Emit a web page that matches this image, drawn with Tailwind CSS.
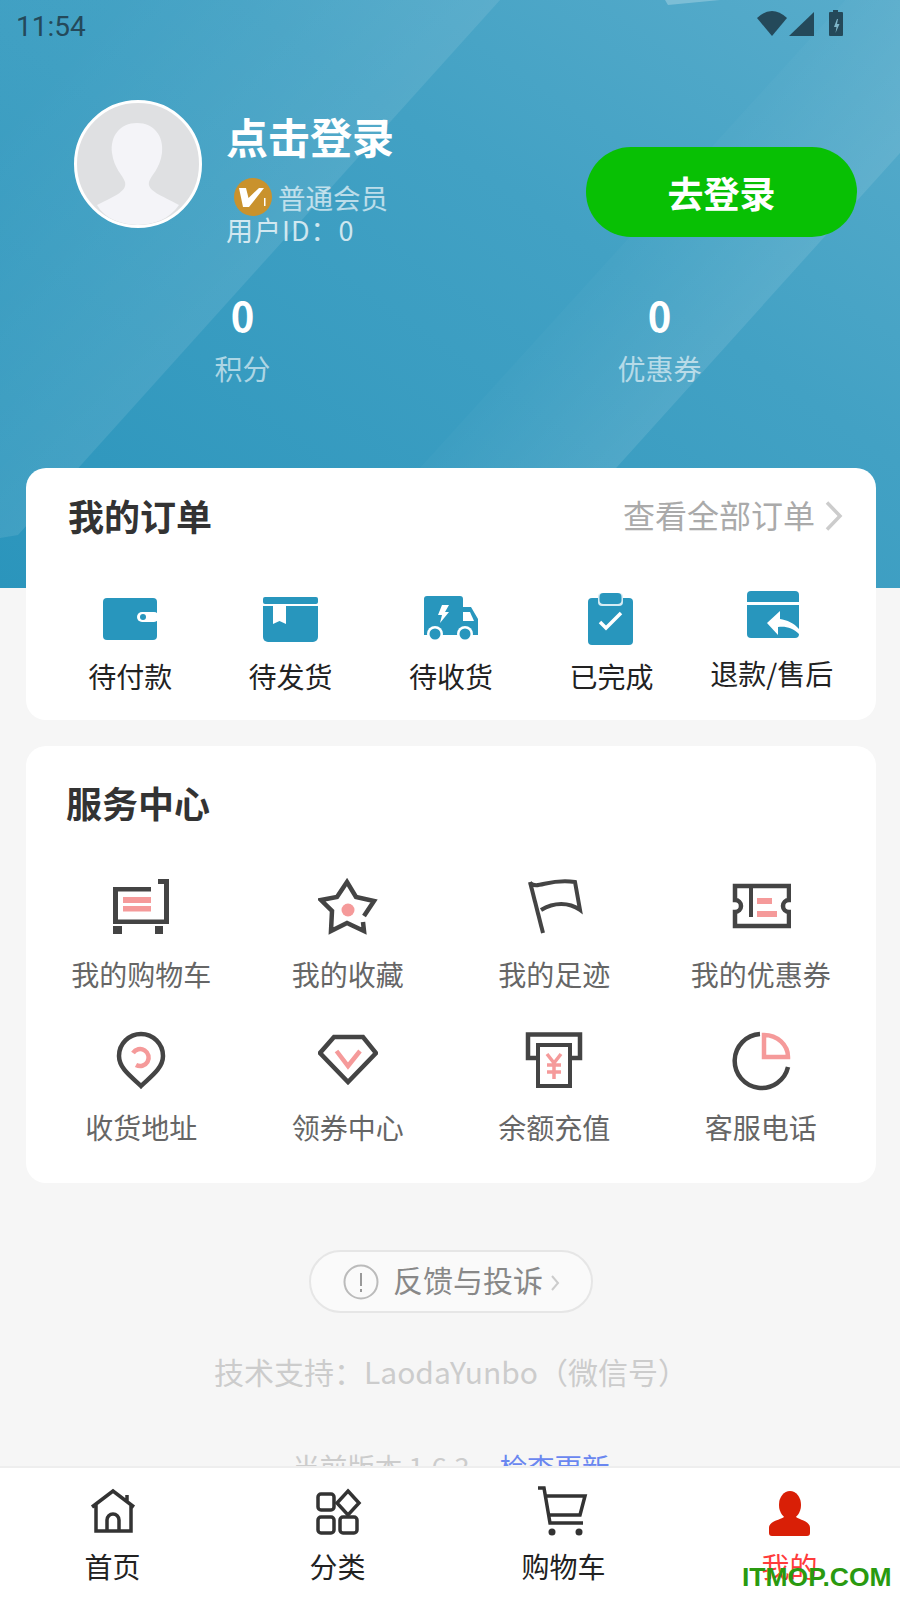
<!DOCTYPE html>
<html lang="zh">
<head>
<meta charset="utf-8">
<script src="https://cdn.jsdelivr.net/npm/@tailwindcss/browser@4"></script>
<title>我的</title>
</head>
<body class="m-0">
<div class="relative w-[900px] h-[1600px] overflow-hidden bg-[#f6f6f6] [font-family:'Noto_Sans_CJK_SC','Noto_Sans',sans-serif]">

  <!-- Header -->
  <header class="relative h-[588px] overflow-hidden bg-[linear-gradient(215deg,#58accb_0%,#42a1c4_38%,#2b95bc_100%)]">
    <svg class="absolute inset-0" width="900" height="588" viewBox="0 0 900 588" fill="none">
      <defs>
        <linearGradient id="g1" x1="60" y1="60" x2="290" y2="268" gradientUnits="userSpaceOnUse">
          <stop offset="0" stop-color="#fff" stop-opacity=".02"/>
          <stop offset="1" stop-color="#fff" stop-opacity=".1"/>
        </linearGradient>
        <linearGradient id="g2" x1="627" y1="240" x2="734" y2="337" gradientUnits="userSpaceOnUse">
          <stop offset="0" stop-color="#fff" stop-opacity=".02"/>
          <stop offset="1" stop-color="#fff" stop-opacity=".1"/>
        </linearGradient>
      </defs>
      <path d="M0 0H500L18 535L0 538Z" fill="url(#g1)"/>
      <path d="M320 588L420 468L627 240L900 -60V153L617 467L510 588Z" fill="url(#g2)"/>
      <path d="M668 5L720 0H665Z" fill="#fff" fill-opacity=".25"/>
    </svg>

    <!-- Status bar -->
    <div class="relative flex h-[50px] items-center pl-[16px] pr-[56px] text-[#24495a]">
      <span class="[font-family:Roboto,sans-serif] text-[28px] leading-[50px] pt-[3px]">11:54</span>
      <div class="ml-auto flex items-start">
        <svg width="87" height="30" viewBox="0 0 87 30" fill="#24495a">
          <path d="M0 8Q15 -6 30 8L15 26Z"/>
          <path d="M32 26L57 2V26Z"/>
          <path d="M72 3a1 1 0 0 1 1-1h3V0h5v2h4a1 1 0 0 1 1 1v22a1 1 0 0 1-1 1H73a1 1 0 0 1-1-1Z"/>
          <path d="M80 9l-3 8h2.500l-1 6 4-9h-2.500l1-5Z" fill="#7fb6c9"/>
        </svg>
      </div>
    </div>

    <!-- Profile -->
    <div class="relative mt-[50px] flex h-[150px] items-start pl-[74px] pr-[43px]">
      <div class="w-[128px] h-[128px] shrink-0 overflow-hidden rounded-full border-[3px] border-white bg-[#dfe0e2]">
        <svg width="122" height="122" viewBox="0 0 122 122">
          <path d="M60 20C43 20 33 33 35 50C37 66 46 72 48 79C50 88 40 92 20 102C28 116 44 122 60 122C78 122 92 116 102 102C84 92 70 88 72 79C74 72 83 66 85 50C87 33 77 20 60 20Z" fill="#f4f4f8"/>
        </svg>
      </div>
      <div class="ml-[24px] mt-[11px] text-white">
        <div class="text-[42px] font-bold leading-[50px]">点击登录</div>
        <div class="mt-[17px] flex h-[37px] items-center pl-[8px]">
          <svg width="38" height="38" viewBox="0 0 38 38" class="shrink-0">
            <circle cx="19" cy="19" r="19" fill="#c9922d"/>
            <path d="M5 10h7l2.500 10L25 10h5L15 29H9Z" fill="#fff"/>
            <rect x="30" y="20" width="1.500" height="8" fill="#fff"/>
          </svg>
          <span class="ml-[6px] text-[27.5px] leading-[30px] text-white/65">普通会员</span>
        </div>
        <div class="text-[27px] leading-[30px] tracking-[1px] text-white/75">用户ID：0</div>
      </div>
      <div class="ml-auto mt-[47px] flex h-[90px] w-[271px] items-center justify-center rounded-full bg-[#08c004] text-[36px] font-bold text-white">去登录</div>
    </div>

    <!-- Stats -->
    <div class="relative mt-[42px] grid grid-cols-2 pl-[34px] pr-[32px] text-center">
      <div>
        <div class="text-[40px] font-bold leading-[46px] text-white">0</div>
        <div class="mt-[10px] text-[28px] leading-[40px] text-white/60">积分</div>
      </div>
      <div>
        <div class="text-[40px] font-bold leading-[46px] text-white">0</div>
        <div class="mt-[10px] text-[28px] leading-[40px] text-white/60">优惠券</div>
      </div>
    </div>
  </header>

  <main class="relative -mt-[120px] pl-[26px] pr-[24px]">
    <!-- Orders -->
    <section class="h-[252px] rounded-[20px] bg-white">
      <div class="flex items-center pl-[42px] pr-[33px] pt-[22px]">
        <h2 class="text-[36px] font-bold leading-[50px] text-[#333]">我的订单</h2>
        <span class="ml-auto -mt-[2px] text-[32px] leading-[50px] text-[#aaa]">查看全部订单</span>
        <svg width="18" height="30" viewBox="0 0 18 30" fill="none" stroke="#ccc" stroke-width="3.500" class="ml-[10px] mt-[2px]"><path d="M2 1.500L15 15L2 28.500"/></svg>
      </div>
      <div class="mt-[50px] grid grid-cols-5 px-[24px] text-[28px] text-[#222]">
        <div class="flex flex-col items-center">
          <svg width="60" height="60" viewBox="0 0 60 60">
            <rect x="3" y="8" width="54" height="42" rx="4" fill="#2896bd"/>
            <rect x="37" y="22" width="22" height="10" rx="5" fill="#fff"/>
            <circle cx="43" cy="27" r="3" fill="#2896bd"/>
          </svg>
          <div class="mt-[6px] leading-[40px]">待付款</div>
        </div>
        <div class="flex flex-col items-center">
          <svg width="60" height="60" viewBox="0 0 60 60">
            <rect x="2" y="7" width="55" height="7" rx="2" fill="#2896bd"/>
            <path d="M2 16H57V47a5 5 0 0 1-5 5H7a5 5 0 0 1-5-5Z" fill="#2896bd"/>
            <path d="M12 16H25V34L18.500 31L12 34Z" fill="#fff"/>
          </svg>
          <div class="mt-[6px] leading-[40px]">待发货</div>
        </div>
        <div class="flex flex-col items-center">
          <svg width="60" height="60" viewBox="0 0 60 60">
            <path d="M3 9a3 3 0 0 1 3-3H39a3 3 0 0 1 3 3V17H50L57 29V45H3Z" fill="#2896bd"/>
            <path d="M42 22H49L53 31H42Z" fill="#fff"/>
            <path d="M21 15H28L24 22H28L19 33L21 25H17Z" fill="#fff"/>
            <circle cx="14" cy="44" r="8" fill="#fff"/><circle cx="14" cy="44" r="5.500" fill="#2896bd"/>
            <circle cx="44" cy="44" r="8" fill="#fff"/><circle cx="44" cy="44" r="5.500" fill="#2896bd"/>
          </svg>
          <div class="mt-[6px] leading-[40px]">待收货</div>
        </div>
        <div class="flex flex-col items-center">
          <svg width="60" height="60" viewBox="0 0 60 60">
            <rect x="7" y="8" width="45" height="47" rx="4" fill="#2896bd"/>
            <rect x="17" y="3" width="25" height="13" rx="4" fill="#d6ecf4"/>
            <rect x="18.500" y="3" width="22" height="11" rx="4" fill="#2896bd"/>
            <path d="M19 32L25 38L40 23" fill="none" stroke="#fff" stroke-width="3.500"/>
          </svg>
          <div class="mt-[6px] leading-[40px]">已完成</div>
        </div>
        <div class="flex flex-col items-center">
          <svg width="60" height="60" viewBox="0 0 60 60">
            <path d="M5 5a4 4 0 0 1 4-4H53a4 4 0 0 1 4 4V12H5Z" fill="#2896bd"/>
            <path d="M5 15H57V44a4 4 0 0 1-4 4H9a4 4 0 0 1-4-4Z" fill="#2896bd"/>
            <path d="M38 21L25 33L36 45V37C44 36 51 38 57 44V39C52 33 45 30 38 29Z" fill="#fff"/>
          </svg>
          <div class="mt-[3px] leading-[40px]">退款/售后</div>
        </div>
      </div>
    </section>

    <!-- Services -->
    <section class="mt-[26px] h-[437px] rounded-[20px] bg-white">
      <h2 class="pl-[40px] pt-[31px] text-[36px] font-bold leading-[50px] text-[#333]">服务中心</h2>
      <div class="mt-[51px] grid grid-cols-4 gap-y-[37px] px-[12px] text-[28px] text-[#666]">
        <div class="flex flex-col items-center">
          <svg width="60" height="60" viewBox="0 0 60 60">
            <path d="M47 1H58V46H2V9H40V13.500H7V41.500H53V6H47Z" fill="#444"/>
            <rect x="2" y="48" width="9" height="8" fill="#444"/><rect x="44" y="48" width="8" height="8" fill="#444"/>
            <rect x="12" y="19" width="28" height="6" fill="#f59a9a"/><rect x="12" y="28" width="28" height="5.500" fill="#f59a9a"/>
          </svg>
          <div class="mt-[16px] leading-[40px]">我的购物车</div>
        </div>
        <div class="flex flex-col items-center">
          <svg width="60" height="60" viewBox="0 0 60 60" fill="none">
            <path d="M45 44L46 53L29 45L13 53L14 33L3 22L19 19L29 4L38 19L56 23L46 38" stroke="#444" stroke-width="4.500"/>
            <circle cx="30" cy="32" r="6.500" fill="#f59a9a"/>
          </svg>
          <div class="mt-[16px] leading-[40px]">我的收藏</div>
        </div>
        <div class="flex flex-col items-center">
          <svg width="60" height="60" viewBox="0 0 60 60" fill="none" stroke="#444" stroke-width="4">
            <path d="M6 4L19 55"/>
            <path d="M6 5C14 12 24 0 51 4L56 32C45 24 30 24 17 32"/>
          </svg>
          <div class="mt-[16px] leading-[40px]">我的足迹</div>
        </div>
        <div class="flex flex-col items-center">
          <svg width="60" height="60" viewBox="0 0 60 60" fill="none">
            <path d="M4 8H58V22A6 6 0 0 0 58 34V48H4V34A6 6 0 0 0 4 22Z" stroke="#444" stroke-width="4.500"/>
            <path d="M20 8V39" stroke="#444" stroke-width="4"/>
            <rect x="26" y="20" width="15" height="6" fill="#f59a9a"/><rect x="26" y="33" width="20" height="6" fill="#f59a9a"/>
          </svg>
          <div class="mt-[16px] leading-[40px]">我的优惠券</div>
        </div>
        <div class="flex flex-col items-center">
          <svg width="60" height="60" viewBox="0 0 60 60" fill="none">
            <path d="M30 55C22 47 8 38 8 25A22 22 0 0 1 52 25C52 38 38 47 30 55Z" stroke="#444" stroke-width="4.500"/>
            <path d="M22 22A8.500 8.500 0 1 1 25 34" stroke="#f59a9a" stroke-width="4.500"/>
          </svg>
          <div class="mt-[16px] leading-[40px]">收货地址</div>
        </div>
        <div class="flex flex-col items-center">
          <svg width="60" height="60" viewBox="0 0 60 60" fill="none">
            <path d="M16 6H45L58 22L30 51L2 22Z" stroke="#444" stroke-width="4.500"/>
            <path d="M18.500 20L30 35L42 20" stroke="#f59a9a" stroke-width="4.500"/>
          </svg>
          <div class="mt-[16px] leading-[40px]">领券中心</div>
        </div>
        <div class="flex flex-col items-center">
          <svg width="60" height="60" viewBox="0 0 60 60" fill="none">
            <path d="M12 27H4V3.500H56V27H48" stroke="#444" stroke-width="4.500"/>
            <path d="M14 14H46V55H14Z" stroke="#444" stroke-width="4"/>
            <path d="M23 23L30 32L37 23M30 32V48M23 34H37M23 41H37" stroke="#f59a9a" stroke-width="3.500"/>
          </svg>
          <div class="mt-[16px] leading-[40px]">余额充值</div>
        </div>
        <div class="flex flex-col items-center">
          <svg width="60" height="60" viewBox="0 0 60 60" fill="none">
            <path d="M29 3A27 27 0 1 0 57 36" stroke="#444" stroke-width="4.500"/>
            <path d="M33 4V26H57A24 22 0 0 0 33 4Z" stroke="#f59a9a" stroke-width="4.500"/>
          </svg>
          <div class="mt-[16px] leading-[40px]">客服电话</div>
        </div>
      </div>
    </section>

    <!-- Footer links -->
    <div class="mt-[67px] flex justify-center">
      <div class="flex h-[63px] w-[284px] items-center rounded-full border-2 border-[#e6e6e6] bg-[#fafafa] pl-[32px]">
        <svg width="36" height="36" viewBox="0 0 36 36" fill="none" class="shrink-0">
          <circle cx="18" cy="18" r="16.500" stroke="#bbb" stroke-width="2"/>
          <path d="M18 9V22M18 25V28" stroke="#999" stroke-width="2"/>
        </svg>
        <span class="ml-[14px] pb-[6px] text-[30px] leading-[40px] text-[#888]">反馈与投诉</span>
        <svg width="10" height="18" viewBox="0 0 10 18" fill="none" stroke="#ccc" stroke-width="2" class="ml-[7px] mt-[3px]"><path d="M2 2L8 9L2 16"/></svg>
      </div>
    </div>
    <p class="mt-[35px] text-center text-[30px] leading-[46px] text-[#ccc]">技术支持：LaodaYunbo（微信号）</p>
    <p class="mt-[52px] flex justify-center text-[27.5px] leading-[40px] text-[#ccc]">当前版本 1.6.3<span class="ml-[30px] text-[#6a87f0]">检查更新</span></p>
  </main>

  <!-- Tab bar -->
  <nav class="absolute inset-x-0 bottom-0 grid h-[134px] grid-cols-4 border-t-2 border-[#eeeeee] bg-white text-center text-[28px] text-[#222]">
    <div class="flex flex-col items-center pt-[16px]">
      <svg width="60" height="60" viewBox="0 0 60 60" fill="none" stroke="#333" stroke-width="3.500">
        <path d="M9 23L30 7L51 23M13 20V47H48V20M24 47V36A6 6 0 0 1 36 36V47M44 11V17"/>
      </svg>
      <div class="leading-[40px] mt-[2px]">首页</div>
    </div>
    <div class="flex flex-col items-center pt-[16px]">
      <svg width="60" height="60" viewBox="0 0 60 60" fill="none" stroke="#333" stroke-width="3.500">
        <rect x="10" y="10" width="16" height="16" rx="3"/>
        <path d="M40 7L51 19L40 31L29 19Z"/>
        <rect x="10" y="33" width="16" height="16" rx="3"/>
        <rect x="32" y="33" width="17" height="16" rx="3"/>
      </svg>
      <div class="leading-[40px] mt-[2px]">分类</div>
    </div>
    <div class="flex flex-col items-center pl-[2px] pt-[16px]">
      <svg width="60" height="60" viewBox="0 0 60 60" fill="none" stroke="#333" stroke-width="3.500">
        <path d="M4 4H10L16 39H49M11 12H51L46 31H14"/>
        <circle cx="18" cy="48" r="3.500" fill="#333" stroke="none"/>
        <circle cx="45" cy="48" r="3.500" fill="#333" stroke="none"/>
      </svg>
      <div class="leading-[40px] mt-[2px]">购物车</div>
    </div>
    <div class="flex flex-col items-center pl-[4px] pt-[16px]">
      <svg width="60" height="60" viewBox="0 0 60 60" fill="#d91f06">
        <ellipse cx="30" cy="21" rx="11" ry="14"/>
        <path d="M24 28H36V33C40 36 50 37 50 44V49A3 3 0 0 1 47 52H12A3 3 0 0 1 9 49V44C9 37 20 36 24 33Z"/>
      </svg>
      <div class="leading-[40px] mt-[2px] text-[#ff3b3b]">我的</div>
    </div>
  </nav>

  <div class="absolute left-[742px] top-[1560px] text-[26.5px] font-bold leading-[34px] text-[#2a9a10] [font-family:'Liberation_Sans',sans-serif]">ITMOP.COM</div>
</div>
</body>
</html>
